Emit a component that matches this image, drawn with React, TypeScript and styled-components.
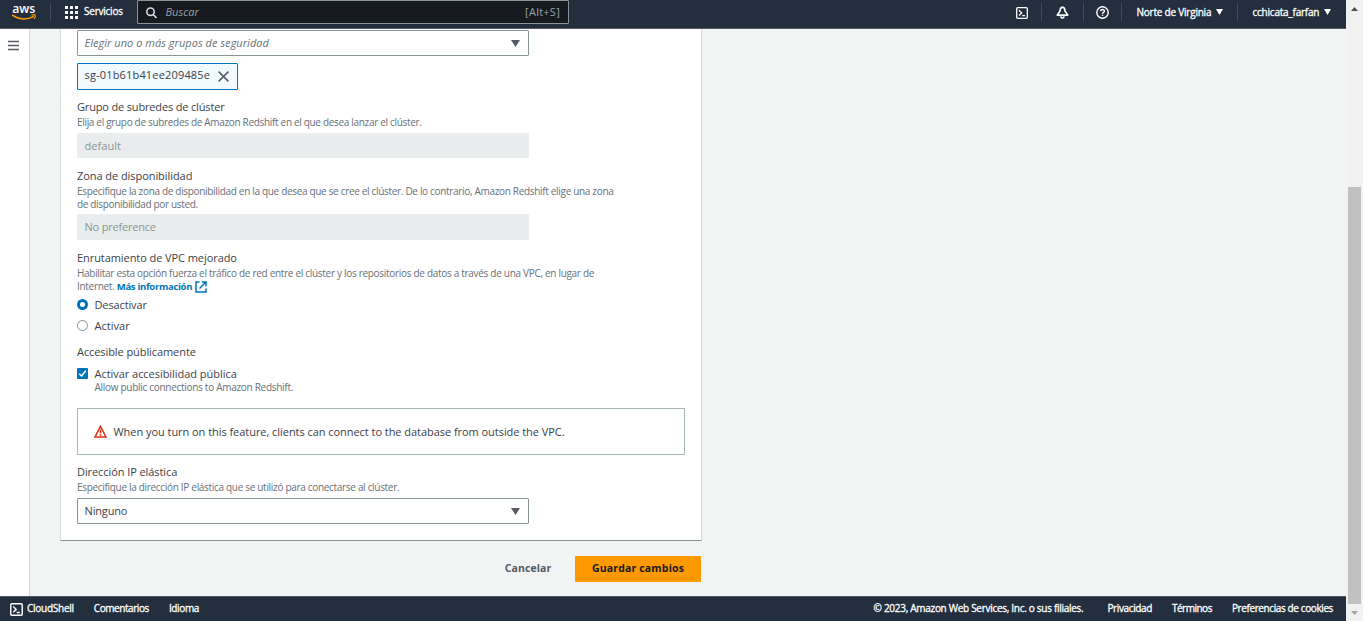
import React from "react";
import styled, { createGlobalStyle } from "styled-components";

const GlobalStyle = createGlobalStyle`
  * { box-sizing: border-box; }
  body {
    margin: 0;
    overflow: hidden;
    background: #f2f3f3;
    color: #3d4148;
    font-family: "Open Sans", "Noto Sans", sans-serif;
    font-size: 11px;
  }
`;

const Window = styled.div`
  display: flex;
  height: 621px;
`;

const Page = styled.div`
  flex: 1;
  min-width: 0;
  display: flex;
  flex-direction: column;
`;

/* Text with its own tracking */
const Text = styled.span<{ $track?: number }>`
  letter-spacing: ${(p) => p.$track ?? 0}px;
  white-space: nowrap;
`;

/* Bright text on the dark navigation bars */
const NavText = styled(Text)`
  -webkit-text-stroke: 0.3px #fff;
`;

/* Top navigation */
const TopNav = styled.header`
  display: flex;
  height: 29px;
  background: #232f3e;
  border-bottom: 1px solid #545b64;
  color: #fff;
  font-size: 10px;
  font-weight: 500;
`;

const LogoLink = styled.a`
  width: 50px;
  padding: 3px 0 0 12px;
`;

const NavDivider = styled.i`
  width: 1px;
  height: 18px;
  margin-top: 3px;
  background: #414b59;
`;

const Services = styled.div`
  display: flex;
  width: 86px;
  height: 24px;
  padding: 0 0 2px 14px;
  gap: 6px;
  align-items: center;

  svg { margin-top: 3px; }
`;

const Search = styled.div`
  display: flex;
  align-items: center;
  width: 432px;
  height: 24px;
  padding: 0 8px 1px 8px;
  background: #161920;
  border: 1px solid #879596;
  border-radius: 1px;
  color: #95a5a6;
  font-size: 11px;
  font-weight: 400;

  em { flex: 1; padding-left: 8.5px; }
  svg { margin-top: 2px; }
`;

const NavTools = styled.div`
  display: flex;
  margin-left: auto;
`;

const NavIcon = styled.div<{ $width: number }>`
  display: flex;
  width: ${(p) => p.$width}px;
  height: 25px;
  align-items: center;
  justify-content: center;
`;

const NavMenu = styled.div<{ $width: number }>`
  display: flex;
  width: ${(p) => p.$width}px;
  height: 23px;
  padding-left: 14.5px;
  align-items: center;
  gap: 5px;
`;

/* Body */
const Body = styled.div`
  display: flex;
  flex: 1;
  min-height: 0;
`;

const SideNav = styled.nav`
  width: 30px;
  padding: 11px 0 0 8px;
  background: #fff;
  border-right: 1px solid #d0d6d6;
`;

const Content = styled.main`
  width: 642px;
  margin-left: 30px;
`;

const Card = styled.section`
  padding: 1px 16px 16px;
  background: #fff;
  border: 1px solid #d5dbdb;
  border-top: 0;
  border-bottom-color: #879596;
`;

const Field = styled.div<{ $gap: number }>`
  display: flex;
  flex-direction: column;
  align-items: flex-start;
  margin-top: ${(p) => p.$gap}px;
`;

const Label = styled(Text)`
  padding-bottom: 2px;
  line-height: 15px;
`;

const Hint = styled.div`
  color: #687078;
  font-size: 10px;
  line-height: 12.5px;
`;

const HintLine = styled(Text)`
  display: block;
  height: 12.5px;
`;

const InfoLink = styled.a`
  color: #0073bb;
  font-size: 9.5px;
  font-weight: 700;

  svg { margin: -2px 0 -3px 3px; vertical-align: baseline; }
`;

const Select = styled.div<{ $gap?: number }>`
  display: flex;
  align-items: center;
  justify-content: space-between;
  width: 452px;
  height: 26px;
  margin-top: ${(p) => p.$gap ?? 0}px;
  padding: 0 8px 2px 6.5px;
  border: 1px solid #879596;
  border-radius: 1px;

  em { color: #687078; }
  svg { margin-top: 3px; }
`;

const DisabledInput = styled.div<{ $height: number; $gap: number }>`
  width: 452px;
  height: ${(p) => p.$height}px;
  margin-top: ${(p) => p.$gap}px;
  padding-left: 7.5px;
  background: #e9eded;
  border-radius: 1px;
  color: #879596;
  line-height: 25px;
`;

const Token = styled.div`
  display: flex;
  align-items: center;
  justify-content: space-between;
  width: 161px;
  height: 27px;
  margin-top: 7px;
  padding: 0 8px 4px 6.5px;
  background: #f1faff;
  border: 1px solid #0073bb;
  border-radius: 1px;

  svg { margin-top: 3px; }
`;

const Option = styled.label<{ $height: number; $top?: number }>`
  display: flex;
  align-items: center;
  gap: 6.5px;
  height: ${(p) => p.$height}px;
  padding-top: ${(p) => p.$top ?? 0}px;
`;

const OptionHint = styled(Hint)`
  margin-top: -1px;
  padding-left: 17.5px;
`;

const Radio = styled.i<{ $checked?: boolean }>`
  width: 11px;
  height: 11px;
  border: ${(p) => (p.$checked ? "3.5px solid #0073bb" : "1px solid #879596")};
  border-radius: 50%;
  background: #fff;
`;

const Checkbox = styled.i`
  display: flex;
  width: 11px;
  height: 11px;
  border-radius: 1px;
  background: #0073bb;
`;

const Warning = styled.div`
  display: flex;
  align-items: center;
  gap: 6.5px;
  height: 47px;
  margin-top: 14.5px;
  padding: 0 16px 1px;
  border: 1px solid #aab7b8;
`;

const Actions = styled.div`
  display: flex;
  justify-content: flex-end;
  margin-top: 15px;
  padding-right: 1px;
`;

const Button = styled.button<{ $primary?: boolean }>`
  width: ${(p) => (p.$primary ? 126 : 94)}px;
  height: 26px;
  padding: 0 0 2px;
  border: 0;
  border-radius: 1px;
  background: ${(p) => (p.$primary ? "#ff9900" : "transparent")};
  color: ${(p) => (p.$primary ? "#16191f" : "#545b64")};
  font: 700 10.5px "Open Sans", sans-serif;
`;

/* Footer */
const Footer = styled.footer`
  display: flex;
  align-items: center;
  height: 25px;
  padding: 0 13px 3px 10px;
  background: #232f3e;
  border-top: 1px solid #545b64;
  color: #fff;
  font-size: 10px;
  font-weight: 500;
`;

const FooterGroup = styled.div<{ $end?: boolean }>`
  display: flex;
  align-items: center;
  gap: 20px;
  margin-left: ${(p) => (p.$end ? "auto" : "0")};

  > :nth-child(2) { margin-left: ${(p) => (p.$end ? 4 : 0)}px; }
`;

const ShellLink = styled.a`
  display: flex;
  align-items: center;
  gap: 4px;

  svg { margin-top: 3px; }
`;

/* Scrollbar */
const Scrollbar = styled.aside`
  display: flex;
  flex-direction: column;
  align-items: center;
  width: 17px;
  background: #f1f1f1;
`;

const ScrollArrow = styled.div`
  display: flex;
  align-items: center;
  justify-content: center;
  height: 17px;
`;

const ScrollTrack = styled.div`
  display: flex;
  flex: 1;
  flex-direction: column;
  justify-content: flex-end;
`;

const ScrollThumb = styled.div`
  width: 13px;
  height: 417px;
  background: #c1c1c1;
`;

const AwsLogo = () => (
  <svg width="25" height="20" viewBox="0 -1 25 20" role="img" overflow="visible">
    <text x="0.2" y="8.8" fill="#fff" fontSize="13" fontWeight="600" textLength="23" lengthAdjust="spacingAndGlyphs">aws</text>
    <path d="M0.5 11.200C6.500 15.800 15.500 16 21.200 12.600" fill="none" stroke="#ff9900" strokeWidth="1.500" strokeLinecap="round" />
    <path d="M19.400 11.300c1.600-.7 3.100-.8 3.700-.3.4.6 0 2.500-1.200 3.900" fill="none" stroke="#ff9900" strokeWidth="1.100" />
  </svg>
);

const GridIcon = () => (
  <svg width="13" height="13" fill="#fff">
    {[0, 5, 10].map((y) => [0, 5, 10].map((x) => <rect key={`${x}-${y}`} x={x} y={y} width="3" height="3" />))}
  </svg>
);

const SearchIcon = () => (
  <svg width="11" height="12" viewBox="0 0 11 12" fill="none" stroke="#d5dbdb" strokeWidth="1.6">
    <circle cx="4.500" cy="4.700" r="3.700" />
    <path d="M7.200 7.500 10.500 11" />
  </svg>
);

const ShellIcon = ({ size = 12 }: { size?: number }) => (
  <svg width={size} height={size} viewBox="0 0 12 12" fill="none" stroke="#fff" strokeWidth="1.300">
    <rect x="0.700" y="0.700" width="10.600" height="10.600" rx="1" />
    <path d="M3 3.300 5.700 5.900 3 8.500M6.200 8.700H9" />
  </svg>
);

const BellIcon = () => (
  <svg width="13" height="13" viewBox="0 0 13 13" fill="none" stroke="#fff" strokeWidth="1.600" strokeLinejoin="round">
    <path d="M6.500 1.100C4.600 1.300 4.100 3 4 5L1.200 9.100H11.800L9 5C8.900 3 8.400 1.300 6.500 1.100Z" />
    <path d="M5 10.200Q5 12 6.500 12T8 10.200" />
  </svg>
);

const HelpIcon = () => (
  <svg width="13" height="13" viewBox="0 0 13 13" fill="none" stroke="#fff" strokeWidth="1.400">
    <circle cx="6.500" cy="6.500" r="5.700" />
    <path d="M4.600 5.300C4.600 2.900 8.400 3 8.400 5.100C8.400 6.400 6.500 6.300 6.500 8M6.500 8.800V10.100" />
  </svg>
);

const Caret = ({ width = 9, height = 7, color = "#545b64" }) => (
  <svg width={width} height={height} viewBox="0 0 9 7" preserveAspectRatio="none">
    <path d="M0 0H9L4.500 7Z" fill={color} />
  </svg>
);

const MenuIcon = () => (
  <svg width="11" height="12" stroke="#545b64" strokeWidth="1.300">
    <path d="M0 1.500H11M0 5.500H11M0 9.500H11" />
  </svg>
);

const CloseIcon = () => (
  <svg width="11" height="11" viewBox="0 0 11 11" stroke="#545b64" strokeWidth="1.500">
    <path d="M0.600 0.600 10.400 10.400M10.400 0.600 0.600 10.400" />
  </svg>
);

const ExternalIcon = () => (
  <svg width="12" height="12" viewBox="0 0 12 12" fill="none" stroke="#0073bb" strokeWidth="1.500">
    <path d="M4.500 1H1V11H11V7.500M6.800 1H11V5.200M11 1 4.500 7.500" />
  </svg>
);

const CheckIcon = () => (
  <svg width="11" height="11" viewBox="0 0 11 11" fill="none" stroke="#fff" strokeWidth="1.500">
    <path d="M2.200 5.700 4.500 8 8.800 2.800" />
  </svg>
);

const WarningIcon = () => (
  <svg width="13" height="13" viewBox="0 0 13 13" fill="none" stroke="#d13212" strokeWidth="1.600">
    <path d="M6.500 1.500 12 12H1Z" />
    <path d="M6.500 4.800V8.300M6.500 9.300V10.800" />
  </svg>
);

export default function App() {
  return (
    <Window>
      <GlobalStyle />
      <Page>
        <TopNav>
          <LogoLink><AwsLogo /></LogoLink>
          <NavDivider />
          <Services>
            <GridIcon />
            <NavText $track={-0.23}>Servicios</NavText>
          </Services>
          <Search>
            <SearchIcon />
            <em>Buscar</em>
            <Text $track={0.25}>[Alt+S]</Text>
          </Search>
          <NavTools>
            <NavIcon $width={39}><ShellIcon /></NavIcon>
            <NavDivider />
            <NavIcon $width={41}><BellIcon /></NavIcon>
            <NavDivider />
            <NavIcon $width={37}><HelpIcon /></NavIcon>
            <NavDivider />
            <NavMenu $width={115}>
              <NavText $track={-0.22}>Norte de Virginia</NavText>
              <Caret width={7} height={6} color="#fff" />
            </NavMenu>
            <NavDivider />
            <NavMenu $width={108}>
              <NavText $track={-0.23}>cchicata_farfan</NavText>
              <Caret width={7} height={6} color="#fff" />
            </NavMenu>
          </NavTools>
        </TopNav>
        <Body>
          <SideNav><MenuIcon /></SideNav>
          <Content>
            <Card>
              <Select>
                <Text as="em" $track={0.03}>Elegir uno o más grupos de seguridad</Text>
                <Caret />
              </Select>
              <Token>
                <Text $track={0.17}>sg-01b61b41ee209485e</Text>
                <CloseIcon />
              </Token>
              <Field $gap={9}>
                <Label $track={-0.16}>Grupo de subredes de clúster</Label>
                <Hint>
                  <HintLine $track={-0.32}>Elija el grupo de subredes de Amazon Redshift en el que desea lanzar el clúster.</HintLine>
                </Hint>
                <DisabledInput $height={25} $gap={4.5}><Text $track={0.05}>default</Text></DisabledInput>
              </Field>
              <Field $gap={10}>
                <Label $track={-0.06}>Zona de disponibilidad</Label>
                <Hint>
                  <HintLine $track={-0.32}>Especifique la zona de disponibilidad en la que desea que se cree el clúster. De lo contrario, Amazon Redshift elige una zona</HintLine>
                  <HintLine $track={-0.34}>de disponibilidad por usted.</HintLine>
                </Hint>
                <DisabledInput $height={26} $gap={4}><Text $track={-0.2}>No preference</Text></DisabledInput>
              </Field>
              <Field $gap={10}>
                <Label $track={-0.07}>Enrutamiento de VPC mejorado</Label>
                <Hint>
                  <HintLine $track={-0.3}>Habilitar esta opción fuerza el tráfico de red entre el clúster y los repositorios de datos a través de una VPC, en lugar de</HintLine>
                  <HintLine $track={-0.3}>
                    Internet. <InfoLink><Text $track={-0.3}>Más información</Text><ExternalIcon /></InfoLink>
                  </HintLine>
                </Hint>
                <Option $height={24}><Radio $checked /><Text $track={-0.13}>Desactivar</Text></Option>
                <Option $height={19}><Radio /><Text $track={0.04}>Activar</Text></Option>
              </Field>
              <Field $gap={9}>
                <Label $track={-0.08}>Accesible públicamente</Label>
                <Option $height={21} $top={4}>
                  <Checkbox><CheckIcon /></Checkbox>
                  <Text $track={-0.04}>Activar accesibilidad pública</Text>
                </Option>
                <OptionHint>
                  <HintLine $track={-0.29}>Allow public connections to Amazon Redshift.</HintLine>
                </OptionHint>
              </Field>
              <Warning>
                <WarningIcon />
                <Text $track={-0.045}>When you turn on this feature, clients can connect to the database from outside the VPC.</Text>
              </Warning>
              <Field $gap={9}>
                <Label $track={-0.08}>Dirección IP elástica</Label>
                <Hint>
                  <HintLine $track={-0.31}>Especifique la dirección IP elástica que se utilizó para conectarse al clúster.</HintLine>
                </Hint>
                <Select $gap={4.5}>
                  <Text $track={-0.15}>Ninguno</Text>
                  <Caret />
                </Select>
              </Field>
            </Card>
            <Actions>
              <Button><Text $track={0.09}>Cancelar</Text></Button>
              <Button $primary><Text $track={0.16}>Guardar cambios</Text></Button>
            </Actions>
          </Content>
        </Body>
        <Footer>
          <FooterGroup>
            <ShellLink><ShellIcon size={13} /><NavText $track={-0.26}>CloudShell</NavText></ShellLink>
            <NavText $track={-0.43}>Comentarios</NavText>
            <NavText $track={-0.35}>Idioma</NavText>
          </FooterGroup>
          <FooterGroup $end>
            <NavText $track={-0.29}>© 2023, Amazon Web Services, Inc. o sus filiales.</NavText>
            <NavText $track={-0.37}>Privacidad</NavText>
            <NavText $track={-0.5}>Términos</NavText>
            <NavText $track={-0.39}>Preferencias de cookies</NavText>
          </FooterGroup>
        </Footer>
      </Page>
      <Scrollbar>
        <ScrollArrow>
          <svg width="7" height="4"><path d="M3.500 0 7 4H0Z" fill="#505050" /></svg>
        </ScrollArrow>
        <ScrollTrack><ScrollThumb /></ScrollTrack>
        <ScrollArrow>
          <svg width="7" height="4"><path d="M0 0H7L3.500 4Z" fill="#a3a3a3" /></svg>
        </ScrollArrow>
      </Scrollbar>
    </Window>
  );
}
